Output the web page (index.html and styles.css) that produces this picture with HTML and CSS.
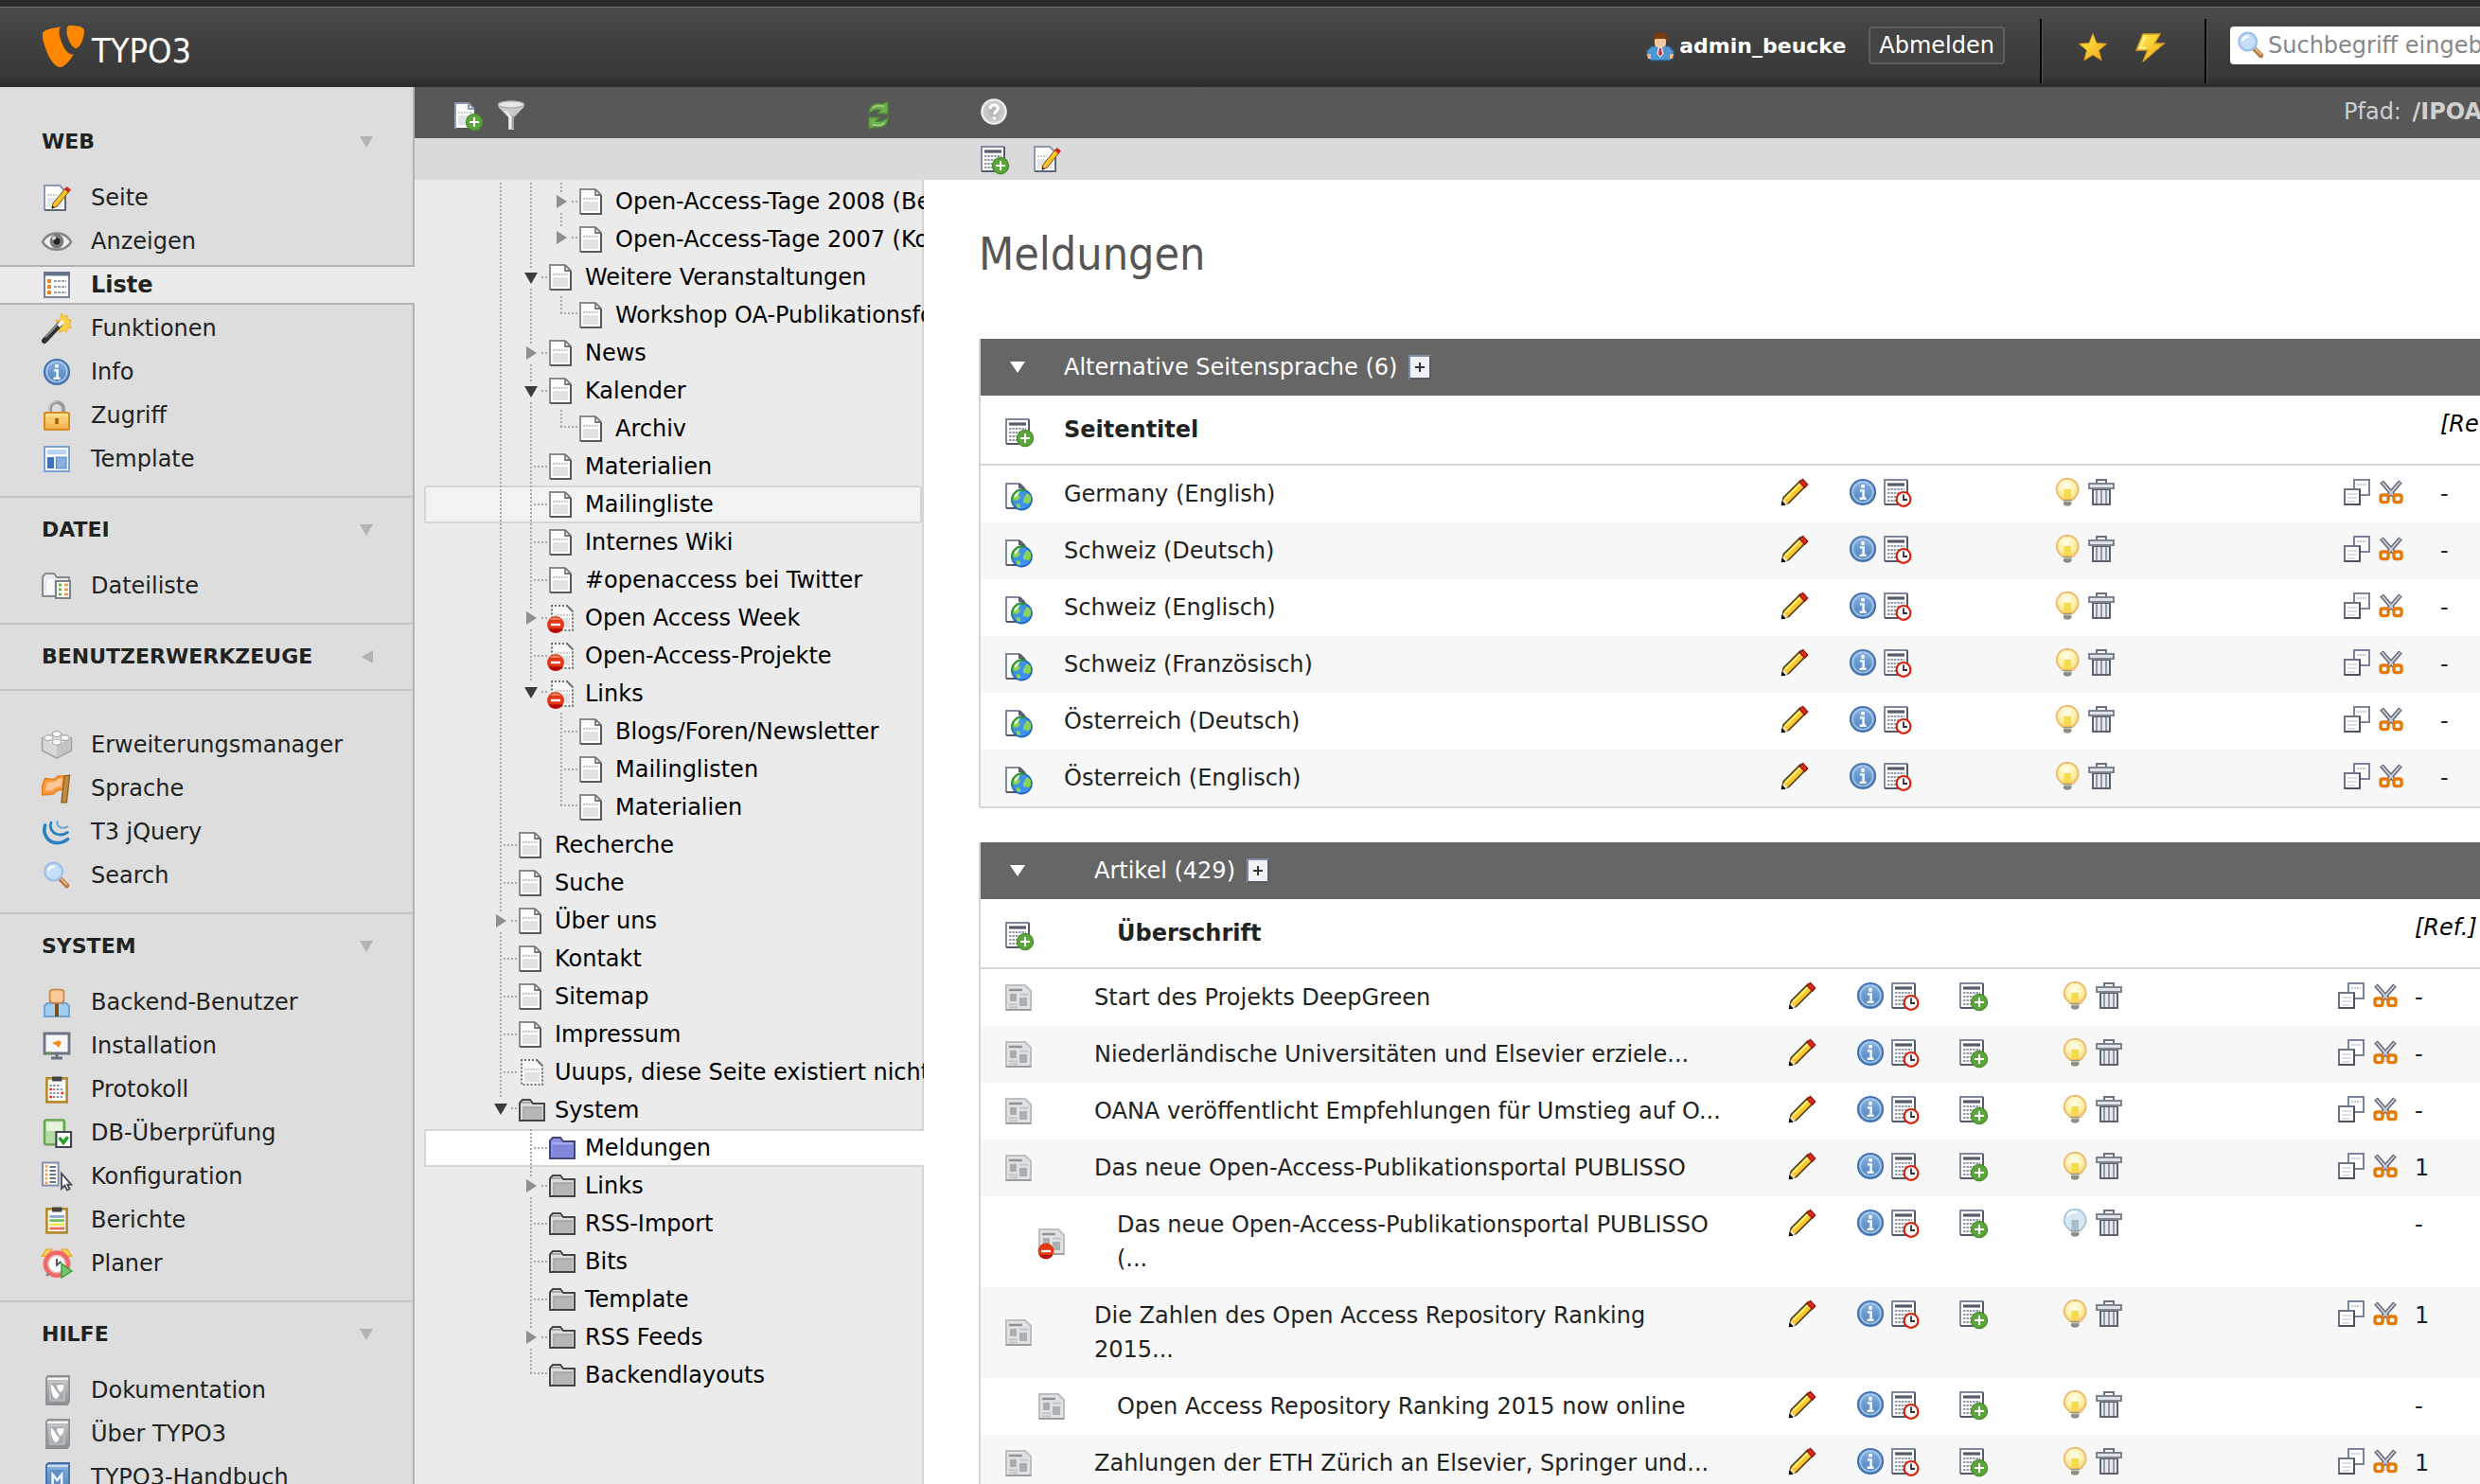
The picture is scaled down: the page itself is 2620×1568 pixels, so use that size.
FILE: index.html
```html
<!DOCTYPE html>
<html lang="de">
<head>
<meta charset="utf-8">
<title>Meldungen – TYPO3</title>
<meta name="viewport" content="width=device-width, initial-scale=1">
<link rel="stylesheet" href="styles.css">
</head>
<body>
<svg class="sprite" width="0" height="0" aria-hidden="true">
  <defs>
    <linearGradient id="blue" x1="0" y1="0" x2="0" y2="1"><stop offset="0" stop-color="#8db4e2"/><stop offset="1" stop-color="#4a7fb8"/></linearGradient>
    <linearGradient id="gold" x1="0" y1="0" x2="0" y2="1"><stop offset="0" stop-color="#fde79a"/><stop offset="1" stop-color="#f0a83c"/></linearGradient>
    <linearGradient id="sun" x1="0" y1="0" x2="1" y2="1"><stop offset="0" stop-color="#fff04a"/><stop offset="1" stop-color="#f2a31c"/></linearGradient>
    <linearGradient id="silver" x1="0" y1="0" x2="0" y2="1"><stop offset="0" stop-color="#c6c8ca"/><stop offset="1" stop-color="#8e9194"/></linearGradient>
    <radialGradient id="glow" cx=".45" cy=".35" r=".7"><stop offset="0" stop-color="#fffef0"/><stop offset=".6" stop-color="#fdf0a8"/><stop offset="1" stop-color="#f9d27a"/></radialGradient>
    <radialGradient id="ball" cx=".5" cy=".5" r=".6"><stop offset="0" stop-color="#b4b4b4"/><stop offset="1" stop-color="#d4d4d4"/></radialGradient>
    <g id="plus-badge"><circle cx="11.5" cy="11.5" r="4.3" fill="#5ba53a" stroke="#4b8a2f" stroke-width=".6"/><path d="M11.5 9v5M9 11.5h5" stroke="#fff" stroke-width="1"/></g>
    <g id="stop-badge"><circle cx="5.5" cy="11.5" r="4.5" fill="#e23a14"/><path d="M1.6 13.6a4.5 4.5 0 0 0 7.8 0z" fill="#b30d0d"/><path d="M2.6 9a4 4 0 0 1 5.8 0z" fill="#f58a6a"/><path d="M3 11.5h5" stroke="#fff" stroke-width="1.2"/></g>
    <g id="record"><path d="M1.5 1.5h12v13h-12z" fill="#fff"/><path d="M1.5 14.5v-13h12" fill="none" stroke="#7f8a9d"/><path d="M13.5 1.5v13h-12" fill="none" stroke="#545b68"/><path d="M3 4h9" stroke="#545b68" stroke-width="1.6"/><path d="M3 6.5h9M3 8.5h9M3 10.5h9M3 12.5h9" stroke="#9098a8" stroke-width=".9" stroke-dasharray="1.2 .5"/></g>
  </defs>
  <symbol id="g-v" viewBox="0 0 32 40"><path class="dots" d="M17 0V40"/></symbol>
  <symbol id="g-t" viewBox="0 0 32 40"><path class="dots" d="M17 0V40M20 20H34"/></symbol>
  <symbol id="g-l" viewBox="0 0 32 40"><path class="dots" d="M17 0V20M16 18H34"/></symbol>
  <symbol id="g-tc" viewBox="0 0 32 40"><path class="dots" d="M17 0V10M17 32V40M28 20H34"/><path fill="#8f8f8f" d="M12 13 23 20 12 27z"/></symbol>
  <symbol id="g-to" viewBox="0 0 32 40"><path class="dots" d="M17 0V10M17 32V40M28 20H34"/><path fill="#3c3c3c" d="M10 15H24L17 27z"/></symbol>
  <symbol id="g-lc" viewBox="0 0 32 40"><path class="dots" d="M17 0V8M28 18H34"/><path fill="#8f8f8f" d="M12 11 23 18 12 25z"/></symbol>
  <symbol id="g-lo" viewBox="0 0 32 40"><path class="dots" d="M17 0V8M28 18H34"/><path fill="#3c3c3c" d="M10 13H24L17 25z"/></symbol>

  <symbol id="i-page" viewBox="0 0 16 16"><path d="M2.5 1.5h8l3 3v10h-11z" fill="#fff"/><path d="M2.5 14.5v-13h8" fill="none" stroke="#8b8b8b"/><path d="M10.5 1.5v3h3M10.5 1.5l3 3" fill="none" stroke="#777" stroke-width=".9"/><path d="M13.5 4.5v10h-11" fill="none" stroke="#5a5a5a"/><path d="M4 6.5h8" stroke="#c8c8c8" stroke-dasharray="1 .5"/><path d="M4 8h8v5H4z" fill="#e2e2e2"/></symbol>
  <symbol id="i-hidden" viewBox="0 0 16 16"><path d="M3 1h8l3 3v11H3z" fill="#f8f8f8"/><path d="M3 1.5h8.5l3 3v10h-11V1.5" fill="none" stroke="#6e6e6e" stroke-dasharray="1 1"/><path d="M11.5 1.5l3 3" fill="none" stroke="#777"/><path d="M5 6.5h8" stroke="#ccc" stroke-dasharray="1 .5"/><path d="M5 8h8v5H5z" fill="#e2e2e2"/></symbol>
  <symbol id="i-blocked" viewBox="0 0 16 16"><use href="#i-hidden" width="16" height="16"/><use href="#stop-badge"/></symbol>
  <symbol id="i-folder" viewBox="0 0 16 16"><path d="M2.5 13.5V4.2L4 2.5h4l1.5 2h6v9z" fill="#dcdcdc" stroke="#454545"/><path d="M4.5 6.5h10V13h-10z" fill="#b6b6b6"/><path d="M4.5 13V6.5h10" fill="none" stroke="#a0a0a0" stroke-width=".7"/><path d="M3.5 4h5" stroke="#a8a8a8"/></symbol>
  <symbol id="i-folder-blue" viewBox="0 0 16 16"><path d="M2.5 13.5V4.2L4 2.5h4l1.5 2h6v9z" fill="#8d92e2" stroke="#40467c"/><path d="M4 6.5h11V13H4z" fill="#8086dc"/><path d="M3.5 5.5h11" stroke="#a8acec"/></symbol>

  <symbol id="i-page-new" viewBox="0 0 16 16"><path d="M1.5 1.5h7l3 3v10h-10z" fill="#fff"/><path d="M1.5 15v-13.5h7l3 3" fill="none" stroke="#8c99b0"/><path d="M8.5 1.5v3h3" fill="none" stroke="#8c99b0"/><path d="M3 6.5h7" stroke="#ccc" stroke-dasharray="1 .5"/><path d="M3 8h7v5H3z" fill="#e2e2e2"/><use href="#plus-badge"/></symbol>
  <symbol id="i-filter" viewBox="0 0 16 16"><path d="M1.2 1.5h13.6v2L9.5 9v6.5h-3V9L1.2 3.5z" fill="#c9c9c9"/><ellipse cx="8" cy="2.2" rx="6.8" ry="1.8" fill="#e8e8e8" stroke="#a8a8a8" stroke-width=".6"/><path d="M5 5.5 7.5 9v6" stroke="#f4f4f4" fill="none"/><path d="M9 8v7" stroke="#989898" stroke-width=".8"/></symbol>
  <symbol id="i-refresh" viewBox="0 0 16 16"><path d="M3 7c0-4 3-6 6.5-5L13 1v6H7.5L9.3 5C7 4.5 5 5 3 7z" fill="#6fae50" stroke="#4f8a35" stroke-width=".7"/><path d="M13 9c0 4-3 6-6.5 5L3 15V9h5.5L6.7 11c2.3.5 4.3 0 6.300-2z" fill="#6fae50" stroke="#4f8a35" stroke-width=".7"/><path d="M5 4c1.500-1.500 3.500-1.500 6-.8M11 12c-1.500 1.500-3.500 1.500-6 .8" stroke="#a6d48c" fill="none" stroke-width=".8"/></symbol>
  <symbol id="i-help" viewBox="0 0 16 16"><circle cx="8" cy="8" r="6.3" fill="url(#ball)" stroke="#ececec" stroke-width="1.2"/><path d="M6 6.500c0-2.800 4.200-2.600 4.200-.3 0 1.500-2 1.600-2 3.200M8.200 10.800v1.400" stroke="#fff" stroke-width="1.500" fill="none"/></symbol>
  <symbol id="i-record-new" viewBox="0 0 16 16"><use href="#record"/><use href="#plus-badge"/></symbol>
  <symbol id="i-history" viewBox="0 0 16 16"><use href="#record"/><circle cx="11.5" cy="11.7" r="3.700" fill="#fff" stroke="#d8230c" stroke-width="1.1"/><path d="M11.5 9.300v2.700h2" stroke="#333" fill="none" stroke-width=".9"/></symbol>
  <symbol id="i-edit-page" viewBox="0 0 16 16"><path d="M1.5 1.5h8l3 3v10h-11z" fill="#fff"/><path d="M1.5 14.5v-13h8l3 3" fill="none" stroke="#8c99b0"/><path d="M12.5 6v8.5h-11" fill="none" stroke="#5f6879"/><path d="M3 6.5h5" stroke="#ccc" stroke-dasharray="1 .5"/><path d="M3 8h8v5H3z" fill="#e2e5ea"/><path d="M5.5 13.5 6 11l6.500-8 2 1.600-6.500 8z" fill="#fcc62a" stroke="#6a4a10" stroke-width=".5"/><path d="M12 3.500 13.300 2l2.200 1.700-1.400 1.600z" fill="#d2261a"/><path d="m5.300 13.800.4-1.600 1.200 1z" fill="#111"/></symbol>
  <symbol id="i-pencil" viewBox="0 0 16 16"><path d="M1.300 14.700 2 11l9-9 2.800 2.800-9 9z" fill="#fcc62a" stroke="#4a3a10" stroke-width=".8"/><path d="m3 11.500 8.500-8.500" stroke="#fff07a" stroke-width="1"/><path d="m10.500 2.700 1.800-1.500L14.900 4l-1.600 1.700z" fill="#dc2a18" stroke="#8a1410" stroke-width=".6"/><path d="M1 15v-2l2 .3v1.700z" fill="#000"/><path d="m2 11.500 2.500 2.500-1.500.5-1.300-1.500z" fill="#f3e2b4"/></symbol>
  <symbol id="i-info" viewBox="0 0 16 16"><circle cx="8" cy="8" r="6.600" fill="url(#blue)" stroke="#4472ac" stroke-width=".9"/><circle cx="8" cy="8" r="5.300" fill="none" stroke="#a9c9ec" stroke-width=".7"/><path d="M8 4v1.800" stroke="#fff" stroke-width="1.700"/><path d="M6.500 7.200h1.800v4M6.300 11.400h3.500" stroke="#fff" stroke-width="1.200" fill="none"/></symbol>
  <symbol id="i-bulb" viewBox="0 0 16 16"><path d="M8 .8a6 5.800 0 0 1 4.500 9.400L11 12H5.500l-1.800-1.800A6 5.800 0 0 1 8 .8z" fill="url(#glow)" stroke="#eeb866" stroke-width=".9"/><path d="M6.200 6.500h3.800v5H6.200z" fill="#f6dc4a"/><path d="M6 12h4.200v2.500L9 15.300H7L6 14.500z" fill="#8c8c84"/><path d="M6 12.800h4.200" stroke="#c8c8bc" stroke-width=".7"/></symbol>
  <symbol id="i-bulb-off" viewBox="0 0 16 16"><path d="M8 .8a6 5.800 0 0 1 4.500 9.400L11 12H5.500l-1.800-1.800A6 5.800 0 0 1 8 .8z" fill="#d8e8f0" stroke="#a6c4d6" stroke-width=".9"/><path d="M6.200 6.500h3.800v5H6.200z" fill="#a8c0ca"/><path d="M4 4.500c1-2 3-2.500 5-2" stroke="#fff" fill="none"/><path d="M6 12h4.200v2.500L9 15.300H7L6 14.500z" fill="#8c8c84"/><path d="M6 12.800h4.200" stroke="#c8c8bc" stroke-width=".7"/></symbol>
  <symbol id="i-trash" viewBox="0 0 16 16"><path d="M3.5 6.5h9v8h-9z" fill="#e6e9ee" stroke="#5c6270"/><path d="M5.5 7v7M8 7v7M10.5 7v7" stroke="#8a91a0" stroke-width=".9"/><path d="M1.5 3.5h13v2.5h-13z" fill="#dfe3e8" stroke="#7c8492"/><path d="M5.5 3V1.5h5V3" fill="none" stroke="#6a7180"/></symbol>
  <symbol id="i-copy" viewBox="0 0 16 16"><path d="M6.5 1.5h8v8h-8z" fill="#fff" stroke="#7a8498"/><path d="M8 4h5" stroke="#c4c8d0" stroke-dasharray="1 .5"/><path d="M1.5 6.5h8v8h-8z" fill="#fff" stroke="#6c7486"/><path d="M1.5 14.5h8v-8" fill="none" stroke="#4c525e"/><path d="M3 9h5M3 11h5M3 13h4" stroke="#cfd3da" stroke-width=".8"/></symbol>
  <symbol id="i-cut" viewBox="0 0 16 16"><path d="m3 2.500 7 8M13 2.500l-7 8" stroke="#5a6070" stroke-width="2.400"/><path d="m3.300 2.800 6.700 7.700M12.700 2.800 6 10.500" stroke="#c9ced6" stroke-width="1"/><rect x="2.500" y="9.500" width="4" height="3.800" rx="1" fill="#fff" stroke="#e67a08" stroke-width="1.700"/><rect x="9.500" y="9.500" width="4" height="3.800" rx="1" fill="#fff" stroke="#e67a08" stroke-width="1.700"/></symbol>
  <symbol id="i-globe" viewBox="0 0 16 16"><path d="M1.5 1.5h7l3 3v10h-10z" fill="#fff"/><path d="M1.5 14.5v-13h7" fill="none" stroke="#7f8a9d"/><path d="M8.5 1.5v2l3 1-3-3M1.5 14.5h7" fill="none" stroke="#545b68"/><circle cx="9.700" cy="10" r="5.300" fill="#3f92ea" stroke="#1e62c8" stroke-width=".8"/><path d="M5 8c.5-2 2.500-3.300 4.500-3.300L8 7l1 2-2 1.500-2-.5zM10.500 9.500l2-3 2 1.500v3l-1.500 1-2.500-.5zM7 12l2 .5v2.300L7 14z" fill="#8ad25a"/><path d="M5.500 7.500 8 5.300l.5 1L6.500 9z" fill="#dff5c8"/><path d="M5 12a5.300 5.300 0 0 1 7-6.800" fill="none" stroke="#2f9c1e" stroke-width=".9"/></symbol>
  <symbol id="i-news" viewBox="0 0 16 16"><path d="M1.5 1.5h10l3 3v10h-13z" fill="#dfe1e2" stroke="#bcbfc1"/><path d="M1.5 14.5h13" stroke="#9a9da0"/><path d="M3 4h7" stroke="#8f9294" stroke-width="1.200"/><path d="M3.500 6h3.500v4H3.500zM8.500 8h4v4.500h-4z" fill="#acafb1"/><path d="M8.500 6.300H13M3 11.700h4.500M3 13.200h4.500" stroke="#bfc2c4" stroke-width=".8"/></symbol>
  <symbol id="i-news-blocked" viewBox="0 0 16 16"><use href="#i-news" width="16" height="16"/><circle cx="5" cy="13" r="4.200" fill="#e23a14"/><path d="M1.400 15a4.200 4.200 0 0 0 7.200 0z" fill="#b30d0d"/><path d="M2.500 13h5" stroke="#fff" stroke-width="1.200"/></symbol>
  <symbol id="i-expand" viewBox="0 0 12 13"><path d="M.5.500h11v12H.5z" fill="#f1f2f7" stroke="#7f8ca6"/><path d="M11.500 .5v12H.5" fill="none" stroke="#565c68"/><path d="M6 4v5M3.500 6.500h5" stroke="#333"/></symbol>

  <symbol id="i-eye" viewBox="0 0 16 16"><path d="M.5 8.300C3.500 2.300 12.500 2.300 15.500 8.300 12.500 13.700 3.500 13.700.5 8.300z" fill="#f2f2f2" stroke="#858585" stroke-width="1.300"/><circle cx="8" cy="8" r="3.700" fill="#7a7a7a"/><circle cx="8" cy="8" r="1.700" fill="#222"/><circle cx="6.500" cy="6.300" r="1" fill="#ddd"/></symbol>
  <symbol id="i-list" viewBox="0 0 16 16"><path d="M1.5 1.5h13v13h-13z" fill="#fff" stroke="#76829a"/><path d="M1 2.200h14" stroke="#66718a" stroke-width="2"/><path d="M3 6h2M3 9h2M3 12h2" stroke="#f5811e" stroke-width="2"/><path d="M6.500 6H13M6.500 9H13M6.500 12H13" stroke="#98a1b2" stroke-width="1" stroke-dasharray="1.500 .5"/></symbol>
  <symbol id="i-wand" viewBox="0 0 16 16"><path d="m10.500 0 1 2 2-1 .1 2.200 2.200.5-1.300 1.800 1.200 2-2.200.2-.3 2.200-1.900-1-1.800 1.300-.5-2.200-2.100-.6 1.300-1.700-.8-2 2.300.1z" fill="#fbd34a" stroke="#eeb01c" stroke-width=".5"/><path d="m1.500 14.500 8-8.500" stroke="#333" stroke-width="3" stroke-linecap="round"/><path d="m8 6 2.500-2.500 1.500 1.500L9.500 7.500z" fill="#f4f4f4"/><path d="m2 12.700 6-6.300" stroke="#9a9a9a" stroke-width=".8"/></symbol>
  <symbol id="i-lock" viewBox="0 0 16 16"><path d="M4.500 8V4.500a3.500 3.500 0 0 1 7 0V8" fill="none" stroke="#9b9b9b" stroke-width="2"/><path d="M4 7V4.500a4 4 0 0 1 4-4" fill="none" stroke="#d0d0d0" stroke-width=".7"/><rect x="1.500" y="6.500" width="13" height="9" rx=".8" fill="url(#gold)" stroke="#d98a20"/><path d="M3.500 9.500h9M3.500 12h9" stroke="#f6c766"/><path d="M8 9.500v3" stroke="#a85f0c" stroke-width="1.800"/></symbol>
  <symbol id="i-template" viewBox="0 0 16 16"><path d="M1.5 1.5h13v13h-13z" fill="#fff" stroke="#7aa0d4"/><path d="M3 3h10v2.500H3z" fill="#b7d4f4"/><path d="M3 7h3.500v6H3z" fill="#3f74b8"/><path d="M7.700 7H13v6H7.700z" fill="#88b0de" stroke="#5a88c4" stroke-width=".6"/></symbol>
  <symbol id="i-filelist" viewBox="0 0 16 16"><path d="M.5 13.500V3.200L2 1.500h4.500L8 3.500h6.500v10z" fill="#e8eaee" stroke="#858990"/><path d="M2.500 4.500h4v8h-4z" fill="#f7f8fa"/><path d="M7.500 5.500h7.500v9H7.500z" fill="#fff" stroke="#7c8088"/><path d="M9 7.500h1.500M9 10h1.500M9 12.500h1.500" stroke="#6aa64a" stroke-width="1.200"/><path d="M12 7.500h2M12 10h2M12 12.500h2" stroke="#ec9540" stroke-width="1.200"/></symbol>
  <symbol id="i-brick" viewBox="0 0 16 16"><path d="m.3 4.500 7.700-3 7.700 3v6.500L8 15 .3 11z" fill="#d8d8d8" stroke="#a0a0a0" stroke-width=".8"/><path d="M.5 4.500 8 8.500l7.500-4-7.500-3z" fill="#ececec"/><path d="M8 8.500v6.300l7.500-4V4.500z" fill="#c4c4c4"/><g fill="#fafafa" stroke="#a8a8a8" stroke-width=".6"><ellipse cx="8" cy="2.300" rx="2.300" ry="1.500"/><ellipse cx="3.700" cy="4.300" rx="2.300" ry="1.500"/><ellipse cx="12.300" cy="4.300" rx="2.300" ry="1.500"/><ellipse cx="8" cy="6.500" rx="2.300" ry="1.500"/></g></symbol>
  <symbol id="i-flag" viewBox="0 0 16 16"><path d="M.3 11.500V6.700l1.500-4 5 .5 2-1.700h4.500l-.8 7-4 .5-2.500 2z" fill="#fb9a3e" stroke="#ec7c14" stroke-width=".7"/><path d="m3 5 4-.5 3-2 1 .5-.7 4-3.300.5L5 9.300 2 9z" fill="#fdc89a"/><path d="M14.800 1 13.200 15.500h-2.800L12 1.500z" fill="#c28a3e" stroke="#8a5c1c" stroke-width=".6"/></symbol>
  <symbol id="i-jquery" viewBox="0 0 16 16"><g fill="none" stroke="#2b80c0" stroke-linecap="round"><path d="M1.800 4.500c-1.500 4.500 1.500 9.300 6.500 9.300 2 0 4-.8 5.500-2" stroke-width="1.800"/><path d="M5 3c-1.300 3.500 1.500 6.500 4.900 6.500 1.600 0 2.800-.5 3.800-1.300" stroke-width="1.400"/><path d="M8.300 2.500c-.6 2 1 3.400 3 3.400 1 0 1.800-.3 2.300-.8" stroke="#6aa8d8" stroke-width="1"/></g></symbol>
  <symbol id="i-search" viewBox="0 0 16 16"><path d="m9.500 9.500 3.800 3.800" stroke="#b8783a" stroke-width="2.600" stroke-linecap="round"/><path d="m10 9.500 3.500 3.500" stroke="#e2b484" stroke-width="1"/><circle cx="6.300" cy="6" r="4.700" fill="#c6def8" stroke="#9bbfe8" stroke-width="1.100"/><path d="M3.500 5.500c.5-1.500 1.800-2.300 3.300-2" stroke="#fff" fill="none" stroke-width="1.200"/></symbol>
  <symbol id="i-user" viewBox="0 0 16 16"><path d="M1.500 15.500V10l1.500-1.500h10l1.500 1.500v5.500z" fill="#a5cdf0" stroke="#6ea4d8"/><path d="M8 8v7.500" stroke="#7a4a10" stroke-width="1.900"/><rect x="4.300" y="1.300" width="7.400" height="7" rx="1.500" fill="#fcc896" stroke="#c68a50" stroke-width=".9"/></symbol>
  <symbol id="i-screen" viewBox="0 0 16 16"><path d="M1.500 1.500h13v10.500h-13z" fill="#f4f6f8" stroke="#6b7483" stroke-width="1.400"/><path d="M5 14.500h6M8 12.500v2" stroke="#6b7483" stroke-width="1.600"/><path d="M5.500 6.500 9 5.300l1.500.7L9 9 7.800 7.800z" fill="#fb8a12"/><path d="M3 11.700h2" stroke="#5cb030"/></symbol>
  <symbol id="i-log" viewBox="0 0 16 16"><path d="M2.700 2.200h10.600v12.500H2.700z" fill="#fff" stroke="#b58a2c" stroke-width="1.300"/><path d="M6 1.800h4.200v1.400H6z" fill="#444" stroke="#444"/><path d="M4.200 6h6M6 8h5.500M4.200 10h5M6 12h5.500" stroke="#8a93a5" stroke-dasharray="1.200 .7"/><path d="M4.200 8h1.300M10.200 10h1.300M4.200 12h1.300" stroke="#e22c2c" stroke-width="1.300"/></symbol>
  <symbol id="i-db" viewBox="0 0 16 16"><rect x="1.500" y="1.200" width="10.500" height="13" rx="1" fill="#b5dba4" stroke="#68a352" stroke-width="1.200"/><path d="M2.500 2.200H11V7H2.500z" fill="#e6f4de"/><path d="M7.700 7.500h7.800v8H7.700z" fill="#fff" stroke="#3f4450" stroke-width="1.100"/><path d="m9.300 10.500 2.200 2.700 2.300-3" fill="none" stroke="#23a023" stroke-width="1.700"/></symbol>
  <symbol id="i-config" viewBox="0 0 16 16"><path d="M.5.700h8.300v12H.5z" fill="#fff" stroke="#8390a6"/><path d="M2.500 2v10" stroke="#f39a3c" stroke-width="1.400" stroke-dasharray="1.200 1"/><path d="M4.200 3h3.300M4.200 5h3.300M4.200 7h3.300M4.200 9h3.300M4.200 11h3.300" stroke="#68748c"/><path d="M10.500 6.500v8l1.700-1.700 1.300 2.500 1.300-.7-1.200-2.300h2z" fill="#fff" stroke="#444a58" stroke-width=".9"/></symbol>
  <symbol id="i-report" viewBox="0 0 16 16"><path d="M2.700 2.200h10.600v12.500H2.700z" fill="#fff" stroke="#b58a2c" stroke-width="1.300"/><path d="M6 1.800h4.200v1.400H6z" fill="#444" stroke="#444"/><path d="M4.200 6.200h7.800" stroke="#8aa6d4" stroke-width="1.400"/><path d="M4.200 8.300h7.800" stroke="#74bb66" stroke-width="1.400"/><path d="M4.200 10.400h7.800" stroke="#f0e452" stroke-width="1.400"/><path d="M4.200 12.500h7.800" stroke="#f0685c" stroke-width="1.400"/></symbol>
  <symbol id="i-clock" viewBox="0 0 16 16"><path d="M0 4 2.500.5h3L3 4.500zM16 4 13.500.5h-3L13 4.500z" fill="#fbd054" stroke="#e6a62a" stroke-width=".6"/><circle cx="8" cy="8.300" r="6" fill="#fff" stroke="#f26a66" stroke-width="2.400"/><circle cx="8" cy="8.300" r="4.500" fill="#fff" stroke="#e8b8b6" stroke-width=".6"/><path d="M8 5.500v3.300l2.300-1.800" fill="none" stroke="#555"/><path d="m2.500 14.500 1.500-1.300" stroke="#888" stroke-width="1.400"/><path d="M10.500 8v7.500L16 12z" fill="#74c46a" stroke="#3f9a3a" stroke-width=".7"/></symbol>
  <symbol id="i-book" viewBox="0 0 16 16"><path d="M2.500 1.500 3.500.500h11v13.500l-1 1.500h-11z" fill="url(#silver)" stroke="#8d9092" stroke-width=".9"/><path d="M3 2h11" stroke="#fff" stroke-width=".8"/><path d="M4.500 3.800h7.500v9.700H4.500z" fill="#a9acae" stroke="#c8cacc" stroke-width=".6"/><path d="M5 5.300c1.500-.5 2 3.200 4.300 4.700-.3 1.700-1.300 2.900-2.200 2.400-1.500-1-2.400-5.400-2.100-7.100zM8 5.200l3.500-.2c.3 1.500-.3 3.300-1.400 4.300C8.800 8.300 8 6.700 8 5.200z" fill="#fff"/></symbol>
  <symbol id="i-manual" viewBox="0 0 16 16"><path d="M2.500 1.500 3.500.500h11v13.500l-1 1.500h-11z" fill="url(#blue)" stroke="#3f6da6" stroke-width=".9"/><path d="M3 2h11" stroke="#dfeaf6" stroke-width=".8"/><path d="M4.500 4h7.500v9.500H4.500z" fill="#5d8fc6"/><path d="M5.800 11.500v-5l2.400 3 2.400-3v5" fill="none" stroke="#e8f2fc" stroke-width="1.300"/></symbol>

  <symbol id="i-admin" viewBox="0 0 16 16"><path d="M1 13v-2.500L3.500 8h9l2.500 2.500V13l-2 2.300H3z" fill="#4f95d2" stroke="#2f6ca8" stroke-width=".6"/><path d="M7 8h2l.8 4L8 14l-1.800-2z" fill="#d8e8f6"/><path d="M7.500 9h1l.5 3-1 1.300L7 12z" fill="#c83030"/><rect x="5" y="2" width="6" height="6.500" rx="2" fill="#f4c8a0"/><path d="M4.300 5.500C3.700 2 5.500.5 8 .5s4.300 1.500 3.700 5L10.500 4h-5z" fill="#7a3c10"/><path d="M1 12h2v2.500H1.500zM13 12h2l-.5 2.500H13z" fill="#f4b888"/></symbol>
  <symbol id="i-star" viewBox="0 0 16 16"><path d="m8 .8 2 5 5.300.3-4.100 3.500 1.400 5.300L8 12l-4.600 2.900 1.400-5.300L.7 6.100 6 5.800z" fill="url(#sun)" stroke="#d2921a" stroke-width=".5"/></symbol>
  <symbol id="i-flash" viewBox="0 0 16 16"><path d="M4.500 1h9L10.500 6h5L4.500 15.500 7 9.500H1z" fill="url(#sun)" stroke="#d8a020" stroke-width=".7"/><path d="M5.500 2.200 3 8.300h3" fill="none" stroke="#fff8a0" stroke-width=".9"/></symbol>
</svg>

<header class="topbar">
  <a class="logo" href="#">
    <svg viewBox="0 0 44 44" aria-hidden="true"><path fill="#ff8700" d="M33 30c-1 .4-1.400.4-2 .4C24 30.400 17.500 14 17.500 6.500c0-3 .8-4 1.500-5C10 2.500 2 4.500 0 7.500-.2 10-.2 12 .5 15 4 31 12 44 18.500 44 23 44 29 37 33 30zM28.500 0c7.500 0 15.500 1 15.500 5.500C44 14 39 24 35.500 24 30.500 24 25.500 12 25.500 6c0-4.500 1-6 3-6z"/></svg>
    <span>TYPO3</span>
  </a>
  <div class="user"><svg class="ico" aria-hidden="true"><use href="#i-admin"/></svg><b>admin_beucke</b></div>
  <button class="logout" type="button">Abmelden</button>
  <div class="tools">
    <a href="#" aria-label="Lesezeichen"><svg class="ico"><use href="#i-star"/></svg></a>
    <a href="#" aria-label="Cache leeren"><svg class="ico"><use href="#i-flash"/></svg></a>
  </div>
  <label class="search"><svg class="ico" aria-hidden="true"><use href="#i-search"/></svg><input type="text" aria-label="Suche" placeholder="Suchbegriff eingeben"></label>
</header>

<div class="workspace">
  <nav class="modules" aria-label="Module">
    <section class="first">
      <h2>WEB<i class="tri"></i></h2>
      <ul>
        <li><a href="#"><svg class="ico"><use href="#i-edit-page"/></svg>Seite</a></li>
        <li><a href="#"><svg class="ico"><use href="#i-eye"/></svg>Anzeigen</a></li>
        <li class="active"><a href="#"><svg class="ico"><use href="#i-list"/></svg>Liste</a></li>
        <li><a href="#"><svg class="ico"><use href="#i-wand"/></svg>Funktionen</a></li>
        <li><a href="#"><svg class="ico"><use href="#i-info"/></svg>Info</a></li>
        <li><a href="#"><svg class="ico"><use href="#i-lock"/></svg>Zugriff</a></li>
        <li><a href="#"><svg class="ico"><use href="#i-template"/></svg>Template</a></li>
      </ul>
    </section>
    <section>
      <h2>DATEI<i class="tri"></i></h2>
      <ul>
        <li><a href="#"><svg class="ico"><use href="#i-filelist"/></svg>Dateiliste</a></li>
      </ul>
    </section>
    <section>
      <h2>BENUTZERWERKZEUGE<i class="tri closed"></i></h2>
    </section>
    <section class="untitled">
      <ul>
        <li><a href="#"><svg class="ico"><use href="#i-brick"/></svg>Erweiterungsmanager</a></li>
        <li><a href="#"><svg class="ico"><use href="#i-flag"/></svg>Sprache</a></li>
        <li><a href="#"><svg class="ico"><use href="#i-jquery"/></svg>T3 jQuery</a></li>
        <li><a href="#"><svg class="ico"><use href="#i-search"/></svg>Search</a></li>
      </ul>
    </section>
    <section>
      <h2>SYSTEM<i class="tri"></i></h2>
      <ul>
        <li><a href="#"><svg class="ico"><use href="#i-user"/></svg>Backend-Benutzer</a></li>
        <li><a href="#"><svg class="ico"><use href="#i-screen"/></svg>Installation</a></li>
        <li><a href="#"><svg class="ico"><use href="#i-log"/></svg>Protokoll</a></li>
        <li><a href="#"><svg class="ico"><use href="#i-db"/></svg>DB-Überprüfung</a></li>
        <li><a href="#"><svg class="ico"><use href="#i-config"/></svg>Konfiguration</a></li>
        <li><a href="#"><svg class="ico"><use href="#i-report"/></svg>Berichte</a></li>
        <li><a href="#"><svg class="ico"><use href="#i-clock"/></svg>Planer</a></li>
      </ul>
    </section>
    <section>
      <h2>HILFE<i class="tri"></i></h2>
      <ul>
        <li><a href="#"><svg class="ico"><use href="#i-book"/></svg>Dokumentation</a></li>
        <li><a href="#"><svg class="ico"><use href="#i-book"/></svg>Über TYPO3</a></li>
        <li><a href="#"><svg class="ico"><use href="#i-manual"/></svg>TYPO3-Handbuch</a></li>
      </ul>
    </section>
  </nav>

  <aside class="pagetree">
    <div class="bar dark">
      <a href="#" aria-label="Neue Seite"><svg class="ico"><use href="#i-page-new"/></svg></a>
      <a href="#" aria-label="Filter"><svg class="ico"><use href="#i-filter"/></svg></a>
      <a class="refresh" href="#" aria-label="Aktualisieren"><svg class="ico"><use href="#i-refresh"/></svg></a>
    </div>
    <div class="bar light"></div>
    <ul class="tree">
      <li><svg class="g"><use href="#g-v"/></svg><svg class="g"><use href="#g-v"/></svg><svg class="g"><use href="#g-tc"/></svg><svg class="ico"><use href="#i-page"/></svg><a href="#">Open-Access-Tage 2008 (Berlin)</a></li>
      <li><svg class="g"><use href="#g-v"/></svg><svg class="g"><use href="#g-v"/></svg><svg class="g"><use href="#g-lc"/></svg><svg class="ico"><use href="#i-page"/></svg><a href="#">Open-Access-Tage 2007 (Konstanz)</a></li>
      <li><svg class="g"><use href="#g-v"/></svg><svg class="g"><use href="#g-to"/></svg><svg class="ico"><use href="#i-page"/></svg><a href="#">Weitere Veranstaltungen</a></li>
      <li><svg class="g"><use href="#g-v"/></svg><svg class="g"><use href="#g-v"/></svg><svg class="g"><use href="#g-l"/></svg><svg class="ico"><use href="#i-page"/></svg><a href="#">Workshop OA-Publikationsfonds</a></li>
      <li><svg class="g"><use href="#g-v"/></svg><svg class="g"><use href="#g-tc"/></svg><svg class="ico"><use href="#i-page"/></svg><a href="#">News</a></li>
      <li><svg class="g"><use href="#g-v"/></svg><svg class="g"><use href="#g-to"/></svg><svg class="ico"><use href="#i-page"/></svg><a href="#">Kalender</a></li>
      <li><svg class="g"><use href="#g-v"/></svg><svg class="g"><use href="#g-v"/></svg><svg class="g"><use href="#g-l"/></svg><svg class="ico"><use href="#i-page"/></svg><a href="#">Archiv</a></li>
      <li><svg class="g"><use href="#g-v"/></svg><svg class="g"><use href="#g-t"/></svg><svg class="ico"><use href="#i-page"/></svg><a href="#">Materialien</a></li>
      <li class="hover"><svg class="g"><use href="#g-v"/></svg><svg class="g"><use href="#g-t"/></svg><svg class="ico"><use href="#i-page"/></svg><a href="#">Mailingliste</a></li>
      <li><svg class="g"><use href="#g-v"/></svg><svg class="g"><use href="#g-t"/></svg><svg class="ico"><use href="#i-page"/></svg><a href="#">Internes Wiki</a></li>
      <li><svg class="g"><use href="#g-v"/></svg><svg class="g"><use href="#g-t"/></svg><svg class="ico"><use href="#i-page"/></svg><a href="#">#openaccess bei Twitter</a></li>
      <li><svg class="g"><use href="#g-v"/></svg><svg class="g"><use href="#g-tc"/></svg><svg class="ico"><use href="#i-blocked"/></svg><a href="#">Open Access Week</a></li>
      <li><svg class="g"><use href="#g-v"/></svg><svg class="g"><use href="#g-t"/></svg><svg class="ico"><use href="#i-blocked"/></svg><a href="#">Open-Access-Projekte</a></li>
      <li><svg class="g"><use href="#g-v"/></svg><svg class="g"><use href="#g-lo"/></svg><svg class="ico"><use href="#i-blocked"/></svg><a href="#">Links</a></li>
      <li><svg class="g"><use href="#g-v"/></svg><svg class="g"></svg><svg class="g"><use href="#g-t"/></svg><svg class="ico"><use href="#i-page"/></svg><a href="#">Blogs/Foren/Newsletter</a></li>
      <li><svg class="g"><use href="#g-v"/></svg><svg class="g"></svg><svg class="g"><use href="#g-t"/></svg><svg class="ico"><use href="#i-page"/></svg><a href="#">Mailinglisten</a></li>
      <li><svg class="g"><use href="#g-v"/></svg><svg class="g"></svg><svg class="g"><use href="#g-l"/></svg><svg class="ico"><use href="#i-page"/></svg><a href="#">Materialien</a></li>
      <li><svg class="g"><use href="#g-t"/></svg><svg class="ico"><use href="#i-page"/></svg><a href="#">Recherche</a></li>
      <li><svg class="g"><use href="#g-t"/></svg><svg class="ico"><use href="#i-page"/></svg><a href="#">Suche</a></li>
      <li><svg class="g"><use href="#g-tc"/></svg><svg class="ico"><use href="#i-page"/></svg><a href="#">Über uns</a></li>
      <li><svg class="g"><use href="#g-t"/></svg><svg class="ico"><use href="#i-page"/></svg><a href="#">Kontakt</a></li>
      <li><svg class="g"><use href="#g-t"/></svg><svg class="ico"><use href="#i-page"/></svg><a href="#">Sitemap</a></li>
      <li><svg class="g"><use href="#g-t"/></svg><svg class="ico"><use href="#i-page"/></svg><a href="#">Impressum</a></li>
      <li><svg class="g"><use href="#g-t"/></svg><svg class="ico"><use href="#i-hidden"/></svg><a href="#">Uuups, diese Seite existiert nicht</a></li>
      <li><svg class="g"><use href="#g-lo"/></svg><svg class="ico"><use href="#i-folder"/></svg><a href="#">System</a></li>
      <li class="selected"><svg class="g"></svg><svg class="g"><use href="#g-t"/></svg><svg class="ico"><use href="#i-folder-blue"/></svg><a href="#">Meldungen</a></li>
      <li><svg class="g"></svg><svg class="g"><use href="#g-tc"/></svg><svg class="ico"><use href="#i-folder"/></svg><a href="#">Links</a></li>
      <li><svg class="g"></svg><svg class="g"><use href="#g-t"/></svg><svg class="ico"><use href="#i-folder"/></svg><a href="#">RSS-Import</a></li>
      <li><svg class="g"></svg><svg class="g"><use href="#g-t"/></svg><svg class="ico"><use href="#i-folder"/></svg><a href="#">Bits</a></li>
      <li><svg class="g"></svg><svg class="g"><use href="#g-t"/></svg><svg class="ico"><use href="#i-folder"/></svg><a href="#">Template</a></li>
      <li><svg class="g"></svg><svg class="g"><use href="#g-tc"/></svg><svg class="ico"><use href="#i-folder"/></svg><a href="#">RSS Feeds</a></li>
      <li><svg class="g"></svg><svg class="g"><use href="#g-l"/></svg><svg class="ico"><use href="#i-folder"/></svg><a href="#">Backendlayouts</a></li>
    </ul>
  </aside>

  <main class="content">
    <div class="bar dark">
      <a href="#" aria-label="Hilfe"><svg class="ico"><use href="#i-help"/></svg></a>
      <div class="path">Pfad: <b>/IPOA/</b></div>
    </div>
    <div class="bar light">
      <a href="#" aria-label="Neuer Datensatz"><svg class="ico"><use href="#i-record-new"/></svg></a>
      <a href="#" aria-label="Seite bearbeiten"><svg class="ico"><use href="#i-edit-page"/></svg></a>
    </div>
    <div class="body">
      <h1>Meldungen</h1>

      <section class="records lang">
        <h2><i class="tri"></i><span>Alternative Seitensprache (6)</span><svg class="expand"><use href="#i-expand"/></svg></h2>
        <table>
          <colgroup><col class="c-icon"><col class="c-title"><col class="c-act"><col class="c-clip"><col></colgroup>
          <thead><tr><th><a href="#" aria-label="Neu"><svg class="ico"><use href="#i-record-new"/></svg></a></th><th class="title">Seitentitel</th><th></th><th></th><th class="ref">[Ref.]</th></tr></thead>
          <tbody>
            <tr><td><svg class="ico"><use href="#i-globe"/></svg></td><td class="title">Germany (English)</td><td><div class="acts"><a href="#"><svg class="ico"><use href="#i-pencil"/></svg></a><a href="#"><svg class="ico"><use href="#i-info"/></svg></a><a href="#"><svg class="ico"><use href="#i-history"/></svg></a><i></i><a href="#"><svg class="ico"><use href="#i-bulb"/></svg></a><a href="#"><svg class="ico"><use href="#i-trash"/></svg></a></div></td><td><div class="clip"><a href="#"><svg class="ico"><use href="#i-copy"/></svg></a><a href="#"><svg class="ico"><use href="#i-cut"/></svg></a></div></td><td>-</td></tr>
            <tr><td><svg class="ico"><use href="#i-globe"/></svg></td><td class="title">Schweiz (Deutsch)</td><td><div class="acts"><a href="#"><svg class="ico"><use href="#i-pencil"/></svg></a><a href="#"><svg class="ico"><use href="#i-info"/></svg></a><a href="#"><svg class="ico"><use href="#i-history"/></svg></a><i></i><a href="#"><svg class="ico"><use href="#i-bulb"/></svg></a><a href="#"><svg class="ico"><use href="#i-trash"/></svg></a></div></td><td><div class="clip"><a href="#"><svg class="ico"><use href="#i-copy"/></svg></a><a href="#"><svg class="ico"><use href="#i-cut"/></svg></a></div></td><td>-</td></tr>
            <tr><td><svg class="ico"><use href="#i-globe"/></svg></td><td class="title">Schweiz (Englisch)</td><td><div class="acts"><a href="#"><svg class="ico"><use href="#i-pencil"/></svg></a><a href="#"><svg class="ico"><use href="#i-info"/></svg></a><a href="#"><svg class="ico"><use href="#i-history"/></svg></a><i></i><a href="#"><svg class="ico"><use href="#i-bulb"/></svg></a><a href="#"><svg class="ico"><use href="#i-trash"/></svg></a></div></td><td><div class="clip"><a href="#"><svg class="ico"><use href="#i-copy"/></svg></a><a href="#"><svg class="ico"><use href="#i-cut"/></svg></a></div></td><td>-</td></tr>
            <tr><td><svg class="ico"><use href="#i-globe"/></svg></td><td class="title">Schweiz (Französisch)</td><td><div class="acts"><a href="#"><svg class="ico"><use href="#i-pencil"/></svg></a><a href="#"><svg class="ico"><use href="#i-info"/></svg></a><a href="#"><svg class="ico"><use href="#i-history"/></svg></a><i></i><a href="#"><svg class="ico"><use href="#i-bulb"/></svg></a><a href="#"><svg class="ico"><use href="#i-trash"/></svg></a></div></td><td><div class="clip"><a href="#"><svg class="ico"><use href="#i-copy"/></svg></a><a href="#"><svg class="ico"><use href="#i-cut"/></svg></a></div></td><td>-</td></tr>
            <tr><td><svg class="ico"><use href="#i-globe"/></svg></td><td class="title">Österreich (Deutsch)</td><td><div class="acts"><a href="#"><svg class="ico"><use href="#i-pencil"/></svg></a><a href="#"><svg class="ico"><use href="#i-info"/></svg></a><a href="#"><svg class="ico"><use href="#i-history"/></svg></a><i></i><a href="#"><svg class="ico"><use href="#i-bulb"/></svg></a><a href="#"><svg class="ico"><use href="#i-trash"/></svg></a></div></td><td><div class="clip"><a href="#"><svg class="ico"><use href="#i-copy"/></svg></a><a href="#"><svg class="ico"><use href="#i-cut"/></svg></a></div></td><td>-</td></tr>
            <tr><td><svg class="ico"><use href="#i-globe"/></svg></td><td class="title">Österreich (Englisch)</td><td><div class="acts"><a href="#"><svg class="ico"><use href="#i-pencil"/></svg></a><a href="#"><svg class="ico"><use href="#i-info"/></svg></a><a href="#"><svg class="ico"><use href="#i-history"/></svg></a><i></i><a href="#"><svg class="ico"><use href="#i-bulb"/></svg></a><a href="#"><svg class="ico"><use href="#i-trash"/></svg></a></div></td><td><div class="clip"><a href="#"><svg class="ico"><use href="#i-copy"/></svg></a><a href="#"><svg class="ico"><use href="#i-cut"/></svg></a></div></td><td>-</td></tr>
          </tbody>
        </table>
      </section>

      <section class="records news">
        <h2><i class="tri"></i><span>Artikel (429)</span><svg class="expand"><use href="#i-expand"/></svg></h2>
        <table>
          <colgroup><col class="c-icon"><col class="c-title"><col class="c-act"><col class="c-clip"><col></colgroup>
          <thead><tr><th><a href="#" aria-label="Neu"><svg class="ico"><use href="#i-record-new"/></svg></a></th><th class="title sub">Überschrift</th><th></th><th></th><th class="ref">[Ref.]</th></tr></thead>
          <tbody>
            <tr><td><svg class="ico"><use href="#i-news"/></svg></td><td class="title">Start des Projekts DeepGreen</td><td><div class="acts"><a href="#"><svg class="ico"><use href="#i-pencil"/></svg></a><a href="#"><svg class="ico"><use href="#i-info"/></svg></a><a href="#"><svg class="ico"><use href="#i-history"/></svg></a><a href="#"><svg class="ico"><use href="#i-record-new"/></svg></a><a href="#"><svg class="ico"><use href="#i-bulb"/></svg></a><a href="#"><svg class="ico"><use href="#i-trash"/></svg></a></div></td><td><div class="clip"><a href="#"><svg class="ico"><use href="#i-copy"/></svg></a><a href="#"><svg class="ico"><use href="#i-cut"/></svg></a></div></td><td>-</td></tr>
            <tr><td><svg class="ico"><use href="#i-news"/></svg></td><td class="title">Niederländische Universitäten und Elsevier erziele...</td><td><div class="acts"><a href="#"><svg class="ico"><use href="#i-pencil"/></svg></a><a href="#"><svg class="ico"><use href="#i-info"/></svg></a><a href="#"><svg class="ico"><use href="#i-history"/></svg></a><a href="#"><svg class="ico"><use href="#i-record-new"/></svg></a><a href="#"><svg class="ico"><use href="#i-bulb"/></svg></a><a href="#"><svg class="ico"><use href="#i-trash"/></svg></a></div></td><td><div class="clip"><a href="#"><svg class="ico"><use href="#i-copy"/></svg></a><a href="#"><svg class="ico"><use href="#i-cut"/></svg></a></div></td><td>-</td></tr>
            <tr><td><svg class="ico"><use href="#i-news"/></svg></td><td class="title">OANA veröffentlicht Empfehlungen für Umstieg auf O...</td><td><div class="acts"><a href="#"><svg class="ico"><use href="#i-pencil"/></svg></a><a href="#"><svg class="ico"><use href="#i-info"/></svg></a><a href="#"><svg class="ico"><use href="#i-history"/></svg></a><a href="#"><svg class="ico"><use href="#i-record-new"/></svg></a><a href="#"><svg class="ico"><use href="#i-bulb"/></svg></a><a href="#"><svg class="ico"><use href="#i-trash"/></svg></a></div></td><td><div class="clip"><a href="#"><svg class="ico"><use href="#i-copy"/></svg></a><a href="#"><svg class="ico"><use href="#i-cut"/></svg></a></div></td><td>-</td></tr>
            <tr><td><svg class="ico"><use href="#i-news"/></svg></td><td class="title">Das neue Open-Access-Publikationsportal PUBLISSO</td><td><div class="acts"><a href="#"><svg class="ico"><use href="#i-pencil"/></svg></a><a href="#"><svg class="ico"><use href="#i-info"/></svg></a><a href="#"><svg class="ico"><use href="#i-history"/></svg></a><a href="#"><svg class="ico"><use href="#i-record-new"/></svg></a><a href="#"><svg class="ico"><use href="#i-bulb"/></svg></a><a href="#"><svg class="ico"><use href="#i-trash"/></svg></a></div></td><td><div class="clip"><a href="#"><svg class="ico"><use href="#i-copy"/></svg></a><a href="#"><svg class="ico"><use href="#i-cut"/></svg></a></div></td><td>1</td></tr>
            <tr class="sub"><td><svg class="ico"><use href="#i-news-blocked"/></svg></td><td class="title">Das neue Open-Access-Publikationsportal PUBLISSO (...</td><td><div class="acts"><a href="#"><svg class="ico"><use href="#i-pencil"/></svg></a><a href="#"><svg class="ico"><use href="#i-info"/></svg></a><a href="#"><svg class="ico"><use href="#i-history"/></svg></a><a href="#"><svg class="ico"><use href="#i-record-new"/></svg></a><a href="#"><svg class="ico"><use href="#i-bulb-off"/></svg></a><a href="#"><svg class="ico"><use href="#i-trash"/></svg></a></div></td><td></td><td>-</td></tr>
            <tr><td><svg class="ico"><use href="#i-news"/></svg></td><td class="title">Die Zahlen des Open Access Repository Ranking 2015...</td><td><div class="acts"><a href="#"><svg class="ico"><use href="#i-pencil"/></svg></a><a href="#"><svg class="ico"><use href="#i-info"/></svg></a><a href="#"><svg class="ico"><use href="#i-history"/></svg></a><a href="#"><svg class="ico"><use href="#i-record-new"/></svg></a><a href="#"><svg class="ico"><use href="#i-bulb"/></svg></a><a href="#"><svg class="ico"><use href="#i-trash"/></svg></a></div></td><td><div class="clip"><a href="#"><svg class="ico"><use href="#i-copy"/></svg></a><a href="#"><svg class="ico"><use href="#i-cut"/></svg></a></div></td><td>1</td></tr>
            <tr class="sub"><td><svg class="ico"><use href="#i-news"/></svg></td><td class="title">Open Access Repository Ranking 2015 now online</td><td><div class="acts"><a href="#"><svg class="ico"><use href="#i-pencil"/></svg></a><a href="#"><svg class="ico"><use href="#i-info"/></svg></a><a href="#"><svg class="ico"><use href="#i-history"/></svg></a><a href="#"><svg class="ico"><use href="#i-record-new"/></svg></a><a href="#"><svg class="ico"><use href="#i-bulb"/></svg></a><a href="#"><svg class="ico"><use href="#i-trash"/></svg></a></div></td><td></td><td>-</td></tr>
            <tr><td><svg class="ico"><use href="#i-news"/></svg></td><td class="title">Zahlungen der ETH Zürich an Elsevier, Springer und...</td><td><div class="acts"><a href="#"><svg class="ico"><use href="#i-pencil"/></svg></a><a href="#"><svg class="ico"><use href="#i-info"/></svg></a><a href="#"><svg class="ico"><use href="#i-history"/></svg></a><a href="#"><svg class="ico"><use href="#i-record-new"/></svg></a><a href="#"><svg class="ico"><use href="#i-bulb"/></svg></a><a href="#"><svg class="ico"><use href="#i-trash"/></svg></a></div></td><td><div class="clip"><a href="#"><svg class="ico"><use href="#i-copy"/></svg></a><a href="#"><svg class="ico"><use href="#i-cut"/></svg></a></div></td><td>1</td></tr>
          </tbody>
        </table>
      </section>
    </div>
  </main>
</div>
</body>
</html>
```
FILE: styles.css
```css
* { box-sizing: border-box; }

body {
  margin: 0;
  height: 100vh;
  overflow: hidden;
  display: flex;
  flex-direction: column;
  font-family: Verdana, "DejaVu Sans", sans-serif;
  font-size: 24px;
  line-height: 36px;
  color: #1f2423;
  background: #fff;
}

a { color: inherit; text-decoration: none; }
ul { list-style: none; margin: 0; padding: 0; }
h1, h2 { margin: 0; font-weight: normal; }

.sprite { position: absolute; }
.dots { fill: none; stroke: #a9a9a9; stroke-width: 2; stroke-dasharray: 2 2; }
.ico { display: block; flex: none; width: 32px; height: 32px; overflow: visible; }

/* Top bar */
.topbar {
  flex: none;
  display: flex;
  align-items: flex-start;
  height: 92px;
  padding: 20px 0 0 45px;
  border-top: 7px solid #2b2b2b;
  background: linear-gradient(#494949, #383838 86%, #2a2a2a);
  box-shadow: inset 0 1px #727272;
  color: #fff;
}
.logo { display: flex; align-items: flex-start; gap: 8px; margin-right: auto; }
.logo svg { width: 44px; height: 44px; }
.logo span {
  font: 36px/54px "DejaVu Sans Condensed", sans-serif;
}
.user { display: flex; align-items: center; gap: 4px; height: 44px; font-size: 22px; }
.logout {
  height: 40px;
  margin: 1px 37px 0 24px;
  padding: 0 9px;
  border: 2px solid #5f5f5f;
  border-radius: 4px;
  background: #444;
  color: #fff;
  font: inherit;
  line-height: 34px;
}
.tools {
  display: flex;
  align-self: stretch;
  gap: 28px;
  margin: -7px 25px 4px 0;
  padding: 14px 42px 0 38px;
  border-left: 2px solid #000;
  border-right: 2px solid #000;
  box-shadow: inset 1px 0 #555, 1px 0 #555;
}
.search {
  display: flex;
  align-items: center;
  flex: none;
  width: 264px;
  height: 40px;
  margin-top: 1px;
  padding-left: 6px;
  border-radius: 4px 0 0 4px;
  background: #fff;
}
.search input {
  flex: 1;
  min-width: 0;
  height: 40px;
  padding: 0 0 0 2px;
  border: 0;
  outline: 0;
  background: none;
  font: inherit;
}
.search input::placeholder { color: #878787; }

.workspace { flex: 1; min-height: 0; display: flex; }

/* Module menu */
.modules {
  flex: none;
  width: 438px;
  overflow: hidden;
  background: #ddd;
  box-shadow: inset -2px 0 #b2b2b2;
}
.modules section { border-bottom: 2px solid #c3c3c3; border-bottom-right-radius: 6px; }
.modules section.first { padding-top: 24px; }
.modules h2 {
  display: flex;
  align-items: center;
  justify-content: space-between;
  height: 68px;
  padding: 0 44px;
  font-size: 22px;
  font-weight: bold;
}
.modules ul { padding: 2px 0 16px; }
.modules .untitled ul { padding-top: 34px; }
.modules li a { display: flex; align-items: center; gap: 20px; height: 46px; padding-left: 44px; }
.modules li.active { padding: 2px 0; }
.modules li.active a {
  height: 42px;
  border: solid #b2b2b2;
  border-width: 2px 0;
  background: #ebebeb;
  font-weight: bold;
}
.tri { border: 7px solid transparent; border-top: 12px solid #b3b3b3; border-bottom: 0; }
.tri.closed { border: 7px solid transparent; border-right: 12px solid #b3b3b3; border-left: 0; }

/* Document header bars */
.bar { display: flex; align-items: center; }
.bar.dark { height: 54px; background: #585858; }
.bar.light { height: 44px; background: #dadada; }

/* Page tree */
.pagetree { flex: none; width: 538px; overflow: hidden; background: #ebebeb; display: flex; flex-direction: column; }
.pagetree .bar { flex: none; gap: 14px; padding: 6px 32px 0 40px; }
.pagetree .refresh { margin-left: auto; }
.tree { flex: 1; padding-top: 3px; box-shadow: inset -2px 0 #d5d5d5; }
.tree li {
  display: flex;
  align-items: center;
  height: 40px;
  margin-left: 10px;
  padding-left: 64px;
  white-space: nowrap;
  color: #000;
}
.tree li.hover { margin-right: 2px; background: #f2f2f2; box-shadow: inset 0 0 0 2px #d6d6d6; border-radius: 3px; }
.tree li.selected { background: #fff; box-shadow: inset 2px 0 #d6d6d6, inset 0 2px #d6d6d6, inset 0 -2px #d6d6d6; }
.tree .g { flex: none; width: 32px; height: 40px; overflow: visible; }
.tree a { padding-left: 10px; }
symbol { overflow: visible; }

/* Record lists */
.content { flex: 1; min-width: 0; overflow: hidden; }
.content .bar { padding-left: 58px; gap: 24px; }
.content .bar.dark { padding-bottom: 2px; }
.path { width: 144px; margin-left: auto; overflow: hidden; white-space: nowrap; color: #cfcfcf; }
.path b { margin-left: 4px; }
.body { padding: 40px 0 0 58px; }
h1 {
  margin-bottom: 52px;
  font: 48px/76px "DejaVu Sans Condensed", sans-serif;
  color: #565656;
}
.records { margin-bottom: 36px; border: solid #d5d5d5; border-width: 0 0 2px 2px; }
.records h2 { display: flex; align-items: center; height: 60px; background: #666; color: #fff; font-size: 24px; }
.records h2 .tri { margin-left: 31px; border-top-color: #fff; border-width: 12px 8px 0; }
.records h2 span { padding: 0 12px 0 41px; }
.records.news h2 span { padding-left: 73px; }
.expand { width: 24px; height: 26px; }
table { width: 100%; border-collapse: separate; border-spacing: 0; table-layout: fixed; }
.c-icon { width: 88px; }
.c-title { width: 756px; }
.c-act { width: 594px; }
.c-clip { width: 104px; }
.news .c-icon { width: 120px; }
.news .c-title { width: 732px; }
.news .c-act { width: 580px; }
.news .c-clip { width: 83px; }
th, td { padding: 12px 0; text-align: left; vertical-align: top; white-space: nowrap; }
th { height: 74px; border-bottom: 2px solid #d5d5d5; }
th.title { vertical-align: middle; }
th.ref { overflow: hidden; font-weight: normal; font-style: italic; color: #000; }
th:first-child, td:first-child { padding: 4px 0 0 24px; vertical-align: middle; }
.news td:first-child { padding-top: 0; }
td.title { padding-right: 60px; white-space: normal; }
tbody tr:nth-child(even) { background: #f7f7f7; }
.news .sub td:first-child { padding-left: 59px; }
.news .sub .title, .news .title.sub { padding-left: 24px; }
.news .sub td.title { padding-right: 48px; }
.acts, .clip { display: flex; gap: 4px; height: 32px; }
.acts > :nth-child(2), .acts > :nth-child(4) { margin-left: 36px; }
.acts > :nth-child(5) { margin-left: 72px; }
.acts i { width: 32px; }
```
